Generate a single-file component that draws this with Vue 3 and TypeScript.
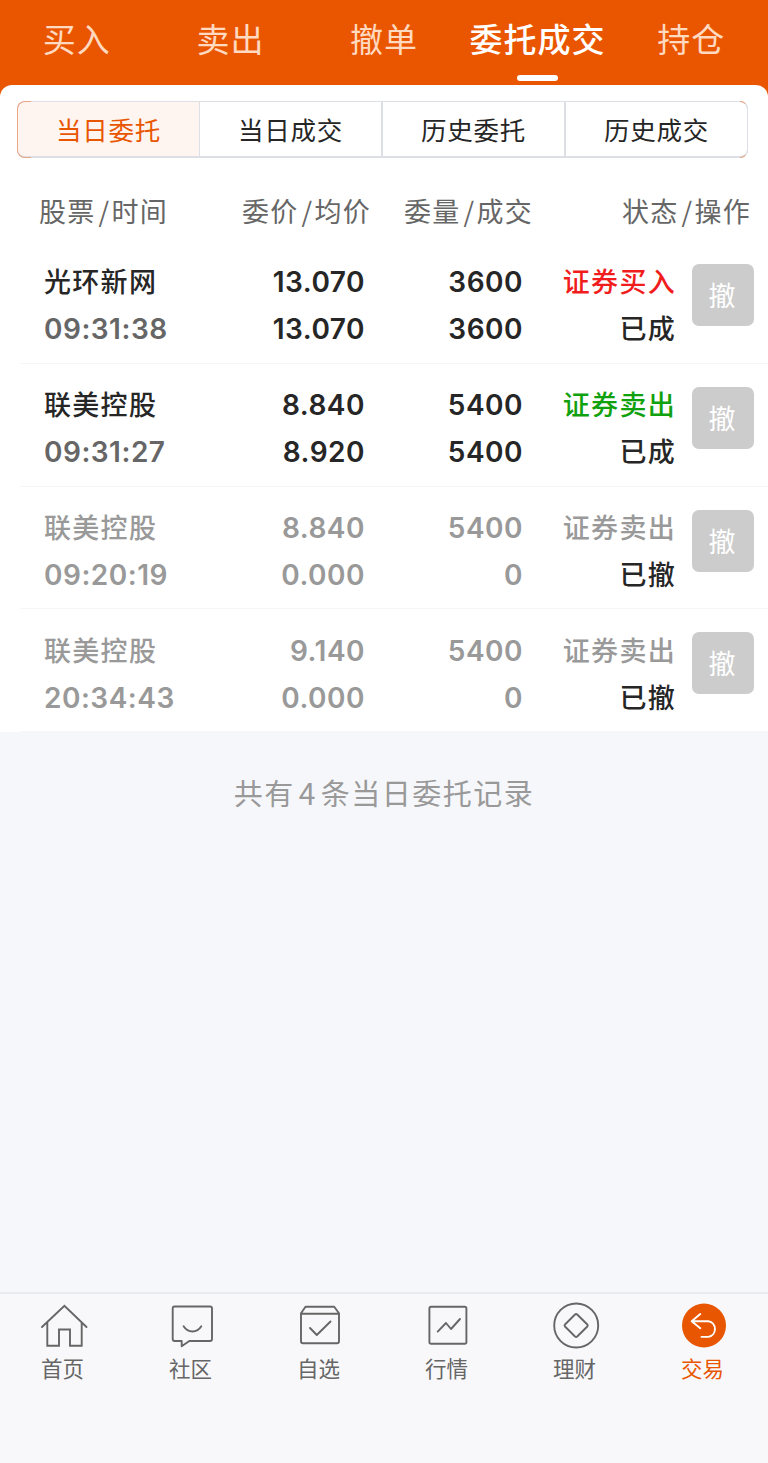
<script setup lang="ts">
interface Order {
  name: string
  time: string
  price: string
  avg: string
  volume: string
  filled: string
  side: string
  status: string
  tone: 'buy' | 'sell' | 'void'
}

const tabs: string[] = ['买入', '卖出', '撤单', '委托成交', '持仓']
const activeTab = 3
const segments: string[] = ['当日委托', '当日成交', '历史委托', '历史成交']
const columns: [string, string][] = [
  ['股票', '时间'],
  ['委价', '均价'],
  ['委量', '成交'],
  ['状态', '操作'],
]
const orders: Order[] = [
  { name: '光环新网', time: '09:31:38', price: '13.070', avg: '13.070', volume: '3600', filled: '3600', side: '证券买入', status: '已成', tone: 'buy' },
  { name: '联美控股', time: '09:31:27', price: '8.840', avg: '8.920', volume: '5400', filled: '5400', side: '证券卖出', status: '已成', tone: 'sell' },
  { name: '联美控股', time: '09:20:19', price: '8.840', avg: '0.000', volume: '5400', filled: '0', side: '证券卖出', status: '已撤', tone: 'void' },
  { name: '联美控股', time: '20:34:43', price: '9.140', avg: '0.000', volume: '5400', filled: '0', side: '证券卖出', status: '已撤', tone: 'void' },
]
const nav: { key: string; label: string }[] = [
  { key: 'home', label: '首页' },
  { key: 'chat', label: '社区' },
  { key: 'pick', label: '自选' },
  { key: 'market', label: '行情' },
  { key: 'wealth', label: '理财' },
  { key: 'trade', label: '交易' },
]
</script>

<template>
  <div class="screen">
    <header class="top">
      <div v-for="(t, i) in tabs" :key="t" class="tab" :class="{ on: i === activeTab }">
        <span>{{ t }}</span>
        <i v-if="i === activeTab" class="bar"></i>
      </div>
    </header>
    <main class="sheet">
      <div class="segs">
        <div v-for="(s, i) in segments" :key="s" class="seg" :class="{ on: i === 0 }">{{ s }}</div>
      </div>
      <div class="cols">
        <span v-for="(c, i) in columns" :key="i" :class="'h' + (i + 1)">{{ c[0] }}<i class="slash">/</i>{{ c[1] }}</span>
      </div>
      <div v-for="(o, i) in orders" :key="i" class="row" :class="o.tone">
        <div class="c c1"><b class="cn">{{ o.name }}</b><b class="num time">{{ o.time }}</b></div>
        <div class="c c2"><b class="num">{{ o.price }}</b><b class="num">{{ o.avg }}</b></div>
        <div class="c c3"><b class="num">{{ o.volume }}</b><b class="num">{{ o.filled }}</b></div>
        <div class="c c4"><b class="cn side">{{ o.side }}</b><b class="cn status">{{ o.status }}</b></div>
        <button class="cancel">撤</button>
      </div>
    </main>
    <p class="total">共有<span class="count">4</span>条当日委托记录</p>
    <nav class="nav">
      <div v-for="n in nav" :key="n.key" class="item" :class="{ on: n.key === 'trade' }">
        <svg class="icon" viewBox="0 0 48 48" fill="none" stroke="#666" stroke-width="1.9" stroke-linecap="round" stroke-linejoin="round">
          <template v-if="n.key === 'home'">
            <path d="M2 25 24.4 3.7 46.5 25M7.3 20.5V43.8H19V27.5H30V43.8H41.7V20.5" stroke-linejoin="miter" />
          </template>
          <template v-else-if="n.key === 'chat'">
            <path d="M6 4.5H42Q44 4.5 44 6.5V37Q44 39 42 39H21.3L13.7 44.2V39H6.7Q4.7 39 4.7 37V6.5Q4.7 4.5 6.5 4.5Z" />
            <path d="M15.6 24.3C20 31.2 29 31.2 33.3 24.3" />
          </template>
          <template v-else-if="n.key === 'pick'">
            <path d="M9.5 4.8H38.2L43 11.3V39.2Q43 41.3 41 41.3H7Q5 41.3 5 39.2V11.3ZM5 11.7H43M14 26 20.8 33 34.5 19.5" />
          </template>
          <template v-else-if="n.key === 'market'">
            <rect x="5.4" y="4.8" width="37" height="37" rx="1.8" />
            <path d="M13.7 29.6 22 21 27 27 36 17" />
          </template>
          <template v-else-if="n.key === 'wealth'">
            <circle cx="24.2" cy="23.5" r="22" />
            <path d="M23 12.5 13 22.5Q12 23.5 13 24.5L23 34.5Q24.1 35.5 25.2 34.5L35.3 24.5Q36.3 23.5 35.3 22.5L25.2 12.5Q24.1 11.5 23 12.5Z" />
          </template>
          <template v-else>
            <circle cx="24" cy="23.5" r="22" fill="#e95602" stroke="none" />
            <path d="M20.3 12 11.7 19.2 20.3 26.2M11.7 19.2H28.5A8 8 0 0 1 28.5 34.9H21.5" stroke="#fff" />
          </template>
        </svg>
        <span class="label">{{ n.label }}</span>
      </div>
    </nav>
  </div>
</template>

<style>
body {
  margin: 0;
}
</style>

<style scoped>
.screen {
  width: 768px;
  height: 1463px;
  overflow: hidden;
  display: flex;
  flex-direction: column;
  background: #f6f7fa;
  font-family: 'Noto Sans CJK SC', sans-serif;
  color: #262626;
}
.top {
  display: flex;
  height: 97px;
  margin-bottom: -12px;
  flex: none;
  background: #ea5600;
}
.tab {
  flex: 1 1 0;
  height: 85px;
  position: relative;
  display: flex;
  justify-content: center;
  font-size: 33px;
  line-height: 77px;
  letter-spacing: 1px;
  white-space: nowrap;
  color: #ffd9c0;
}
.tab.on {
  color: #fff;
  font-weight: 500;
}
.bar {
  position: absolute;
  left: 50%;
  bottom: 4px;
  width: 41px;
  height: 6px;
  margin-left: -20.5px;
  border-radius: 3px;
  background: #fff;
}
.sheet {
  position: relative;
  flex: none;
  height: 647px;
  background: #fff;
  border-radius: 12px 12px 0 0;
}
.segs {
  position: relative;
  display: flex;
  margin: 16px 20px 0 17px;
  height: 57px;
  box-sizing: border-box;
  border: 1px solid #dcdfe3;
  border-bottom-width: 2px;
  border-radius: 8px;
}
/* Tinted rounded ends of the segmented control */
.segs::before,
.segs::after {
  content: '';
  position: absolute;
  top: -1px;
  bottom: -2px;
  width: 8px;
  box-sizing: border-box;
  border: 1px solid #e9a584;
}
.segs::before {
  left: -1px;
  width: 14px;
  border-right: 0;
  border-radius: 8px 0 0 8px;
}
.segs::after {
  right: -1px;
  border-left: 0;
  border-right-color: #dcdfe3;
  border-radius: 0 8px 8px 0;
}
.seg {
  flex: 1 1 0;
  border-left: 2px solid #dcdfe3;
  text-align: center;
  font-size: 25.5px;
  letter-spacing: 0.8px;
  line-height: 54px;
}
.seg.on {
  border-left: 0;
  border-radius: 7px 0 0 7px;
  background: #fef5f0;
  color: #e95602;
}
.seg:nth-child(2) {
  border-left-width: 1px;
}
.cols {
  display: flex;
  height: 82px;
  align-items: center;
  font-size: 27px;
  line-height: 40px;
  letter-spacing: 1.3px;
  color: #666;
  white-space: nowrap;
}
.cols span {
  padding-top: 23px;
  box-sizing: border-box;
}
.slash {
  font-style: normal;
  margin: 0 1px 0 3px;
}
.h1 {
  width: 242px;
  padding-left: 39px;
}
.h2 {
  width: 162px;
}
.h3 {
  width: 218px;
}
.row {
  display: grid;
  grid-template-columns: 156px 165px 158px 153px 79px;
  margin-left: 20px;
  padding-left: 24px;
  height: 122.8px;
  box-sizing: border-box;
  border-bottom: 1.5px solid #f6f6f7;
  position: relative;
  top: 1.1px;
}
.c {
  display: flex;
  flex-direction: column;
  padding-top: 18.4px;
  text-align: right;
  white-space: nowrap;
}
.c1 {
  text-align: left;
}
.c b {
  height: 47px;
  line-height: 46px;
}
.cn {
  font-size: 27px;
  letter-spacing: 1.3px;
  font-weight: 500;
}
.c .cn {
  line-height: 44px;
}
.num {
  font-family: Inter, sans-serif;
  font-size: 28px;
  font-weight: 560;
  letter-spacing: 0.5px;
}
.time {
  color: #666;
}
.buy .side {
  color: #f11d1d;
}
.sell .side {
  color: #12a10e;
}
.void .c b {
  color: #999;
}
.void .c .status {
  color: #262626;
}
.cancel {
  width: 62px;
  height: 62px;
  margin: 23px 0 0 16px;
  padding: 0 2px 0 0;
  border: 0;
  border-radius: 7px;
  background: #ccc;
  color: #fff;
  font: 27px/62px 'Noto Sans CJK SC', sans-serif;
}
.total {
  margin: 39px 0 0;
  text-align: center;
  font-size: 29px;
  line-height: 43px;
  letter-spacing: 1.5px;
  color: #999;
}
.count {
  margin: 0 4px 0 4px;
  font-size: 30px;
}
.nav {
  display: flex;
  margin-top: auto;
  height: 171px;
  box-sizing: border-box;
  border-top: 2px solid #e9ebee;
  background: #f8f8fa;
}
.item {
  flex: 1 1 0;
  display: flex;
  flex-direction: column;
  align-items: center;
  color: #666;
}
.item.on {
  color: #e95602;
}
.icon {
  width: 48px;
  height: 48px;
  margin-top: 8px;
}
.label {
  font-size: 21.5px;
  line-height: 32px;
  margin-top: 2px;
  margin-right: 3px;
}
</style>
